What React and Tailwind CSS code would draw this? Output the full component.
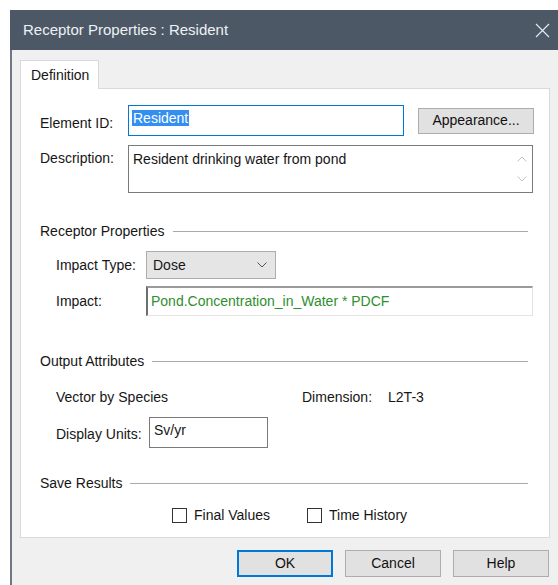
import React from 'react'

const font = "font-['Liberation_Sans',Arial,sans-serif]"

// small chevron used by the combo box and the memo scroller
const Chevron = ({ up = false, className = '' }) => (
  <svg width="10" height="6" viewBox="0 0 10 6" className={className}>
    <path
      d={up ? 'M0.5 5.5 L5 1 L9.5 5.5' : 'M0.5 0.5 L5 5 L9.5 0.5'}
      fill="none"
      stroke="currentColor"
      strokeWidth="1"
    />
  </svg>
)

const GroupHeading = ({ title, className = '' }) => (
  <div className={`flex items-center h-[18px] ${className}`}>
    <span className="whitespace-nowrap">{title}</span>
    <div className="flex-1 h-px bg-[#a9a9a9] ml-[8px] mr-[6px]" />
  </div>
)

const Checkbox = ({ label }) => (
  <label className="flex items-center h-[16px]">
    <span className="w-[15px] h-[15px] border border-[#333] bg-white" />
    <span className="ml-[7px]">{label}</span>
  </label>
)

const Button = ({ children, primary = false }) => (
  <button
    className={`w-[96px] h-[27px] bg-[#e1e1e1] text-[14px] text-[#111] ${
      primary ? 'border-2 border-[#0078d7]' : 'border border-[#adadad]'
    }`}
  >
    {children}
  </button>
)

const App = () => {
  return (
    <div className={`w-[558px] h-[585px] bg-white pt-[10px] pl-[10px] overflow-hidden ${font} text-[14px] text-[#161616]`}>
      <div className="h-full flex flex-col">
        {/* title bar */}
        <div className="h-[40px] bg-[#4c5866] flex items-center justify-between pl-[13px] pr-[8px]">
          <span className="text-[15px] text-[#eef1f4]">Receptor Properties : Resident</span>
          <svg width="15" height="15" viewBox="0 0 15 15">
            <path d="M1 1 L14 14 M14 1 L1 14" stroke="#e4e8ec" strokeWidth="1.2" />
          </svg>
        </div>

        <div className="flex-1 bg-[#f0f0f0] border-l-2 border-[#6f7782] pt-[10px]">
          {/* tab strip */}
          <div className="ml-[8px] flex">
            <div className="relative z-10 w-[79px] h-[29px] -mb-px bg-white border border-b-0 border-[#d9d9d9] pl-[10px] flex items-center">
              Definition
            </div>
          </div>

          {/* tab page */}
          <div className="ml-[8px] w-[530px] h-[450px] bg-white border border-[#d9d9d9] pt-[16px] pl-[19px] pr-[15px]">
            <div className="flex items-center h-[31px]">
              <span className="w-[88px] pt-[6px]">Element ID:</span>
              <div className="w-[276px] h-[31px] border border-[#0078d7] bg-white flex items-center pl-[3px] pb-[5px]">
                <span className="bg-[#3390f0] text-white leading-[16px] px-px">Resident</span>
              </div>
              <button className="ml-[14px] w-[116px] h-[26px] bg-[#e1e1e1] border border-[#adadad] text-[14px] text-[#111]">
                Appearance...
              </button>
            </div>

            <div className="flex mt-[9px]">
              <span className="w-[88px] pt-[3px]">Description:</span>
              <div className="w-[405px] h-[48px] border border-[#7a7a7a] bg-white flex">
                <span className="flex-1 pl-[4px] pt-[3px]">Resident drinking water from pond</span>
                <div className="w-[20px] flex flex-col items-center justify-between py-[10px] text-[#c4c4c4]">
                  <Chevron up />
                  <Chevron />
                </div>
              </div>
            </div>

            <GroupHeading title="Receptor Properties" className="mt-[29px]" />

            <div className="ml-[16px]">
              <div className="flex items-center mt-[11px]">
                <span className="w-[90px]">Impact Type:</span>
                <div className="w-[130px] h-[28px] bg-[#e5e5e5] border border-[#adadad] flex items-center justify-between pl-[6px] pr-[8px]">
                  <span>Dose</span>
                  <Chevron className="text-[#555]" />
                </div>
              </div>

              <div className="flex items-center mt-[7px]">
                <span className="w-[90px]">Impact:</span>
                <div className="w-[387px] h-[30px] bg-white border-t-2 border-l-2 border-r border-b border-t-[#9a9a9a] border-l-[#6e6e6e] border-r-[#e3e3e3] border-b-[#e3e3e3] flex items-center pl-[3px] text-[#2f8f2f]">
                  Pond.Concentration_in_Water * PDCF
                </div>
              </div>
            </div>

            <GroupHeading title="Output Attributes" className="mt-[36px]" />

            <div className="ml-[16px]">
              <div className="flex items-center h-[18px] mt-[18px]">
                <span className="w-[246px]">Vector by Species</span>
                <span>Dimension:</span>
                <span className="ml-[16px]">L2T-3</span>
              </div>

              <div className="flex items-center mt-[11px]">
                <span className="w-[93px] pt-[4px]">Display Units:</span>
                <div className="w-[119px] h-[31px] border border-[#7a7a7a] bg-white pl-[4px] pt-[2px]">
                  Sv/yr
                </div>
              </div>
            </div>

            <GroupHeading title="Save Results" className="mt-[26px]" />

            <div className="flex items-center gap-[37px] ml-[132px] mt-[15px]">
              <Checkbox label="Final Values" />
              <Checkbox label="Time History" />
            </div>
          </div>

          {/* dialog buttons */}
          <div className="flex justify-end gap-[12px] mt-[12px] pr-[9px]">
            <Button primary>OK</Button>
            <Button>Cancel</Button>
            <Button>Help</Button>
          </div>
        </div>
      </div>
    </div>
  )
}

export default App
